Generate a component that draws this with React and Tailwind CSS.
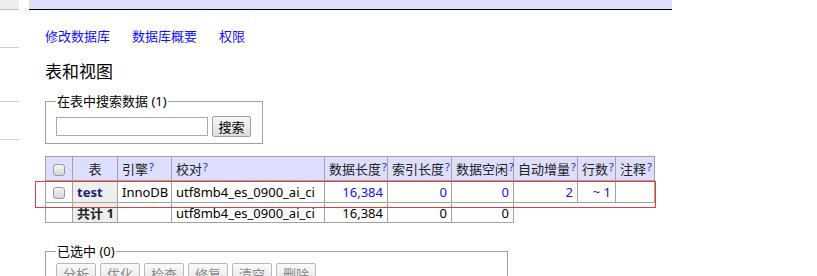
import React from "react";

const font = { fontFamily: '"Noto Sans", "Noto Sans CJK SC", sans-serif' };

const Check = () => (
  <span className="inline-block w-[12px] h-[12px] rounded-[3px] border border-[#9a9a9a] bg-gradient-to-b from-[#f6f6f6] to-[#d6d6d6] align-middle"></span>
);

const Q = () => <sup className="text-[11px] text-[#2020ff] ml-[1px] relative top-[-3px]">?</sup>;

const headers = [
  { label: "引擎", w: "w-[54px]" },
  { label: "校对", w: "w-[153px]" },
  { label: "数据长度", w: "w-[63px]" },
  { label: "索引长度", w: "w-[64px]" },
  { label: "数据空闲", w: "w-[62px]" },
  { label: "自动增量", w: "w-[64px]" },
  { label: "行数", w: "w-[38px]" },
  { label: "注释", w: "w-[39px]" },
];

const Sidebar = () => (
  <div className="w-[19px] shrink-0 flex flex-col">
    <div className="h-[10px] shrink-0 bg-[#eeeeee] border-b border-[#bdbdbd]"></div>
    <div className="h-[38px] shrink-0 border-b border-[#cfcfcf]"></div>
    <div className="h-[54px] shrink-0 border-b border-[#cfcfcf]"></div>
    <div className="h-[38px] shrink-0 border-b border-[#cfcfcf]"></div>
  </div>
);

const App = () => {
  const cell = "border border-[#a3a3a3] px-[4px] py-0";
  const btns = ["分析", "优化", "检查", "修复", "清空", "删除"];
  return (
    <div className="relative w-[817px] h-[276px] overflow-hidden bg-white flex items-start gap-[10px] text-[13px] text-black" style={font}>
      <Sidebar />
      <div className="shrink-0">
        <div className="w-[643px] h-[10px] bg-[#dedeff] border-b border-black"></div>
        <div className="pl-[16px]">
          <div className="mt-[17px] flex gap-[22px] leading-[18px] text-[#1010ff]">
            <span>修改数据库</span>
            <span>数据库概要</span>
            <span>权限</span>
          </div>
          <h2 className="mt-[16px] text-[17px] leading-[22px]">表和视图</h2>
          <fieldset className="mt-[9px] w-[218px] border border-[#a0a0a0] px-[10px] pb-[6px]">
            <legend className="px-[1px] leading-[18px]">在表中搜索数据 (1)</legend>
            <div className="mt-[6px] flex items-center gap-[4px]">
              <input className="w-[152px] h-[19px] border border-[#a9a9a9] bg-white outline-none" />
              <button className="w-[39px] h-[21px] border border-[#a0a0a0] rounded-[2px] bg-gradient-to-b from-[#f8f8f8] to-[#dcdcdc] text-[13px] leading-[18px]">搜索</button>
            </div>
          </fieldset>
          <table className="mt-[12px] border-collapse table-fixed w-[609px] leading-[18px]">
            <thead>
              <tr className="h-[24px] bg-[#dedeff] text-[#222]">
                <th className={`${cell} w-[27px] text-center`}><Check /></th>
                <th className={`${cell} w-[45px] text-center font-normal`}>表</th>
                {headers.map((h) => (
                  <th key={h.label} className={`${cell} ${h.w} text-left font-normal whitespace-nowrap`}>
                    {h.label}
                    <Q />
                  </th>
                ))}
              </tr>
            </thead>
            <tbody>
              <tr className="h-[22px]">
                <td className={`${cell} text-center`}><Check /></td>
                <th className={`${cell} text-left bg-[#eeeeee] font-bold text-[#1c1c80]`}>test</th>
                <td className={cell}>InnoDB</td>
                <td className={`${cell} whitespace-nowrap`}>utf8mb4_es_0900_ai_ci</td>
                <td className={`${cell} text-right text-[#1010ff]`}>16,384</td>
                <td className={`${cell} text-right text-[#1010ff]`}>0</td>
                <td className={`${cell} text-right text-[#1010ff]`}>0</td>
                <td className={`${cell} text-right text-[#1010ff]`}>2</td>
                <td className={`${cell} text-right text-[#1010ff]`}>~ 1</td>
                <td className={cell}></td>
              </tr>
              <tr className="h-[20px]">
                <td className={cell}></td>
                <th className={`${cell} text-left bg-[#eeeeee] font-bold text-[#222] whitespace-nowrap`}>共计 1</th>
                <td className={cell}></td>
                <td className={`${cell} whitespace-nowrap`}>utf8mb4_es_0900_ai_ci</td>
                <td className={`${cell} text-right`}>16,384</td>
                <td className={`${cell} text-right`}>0</td>
                <td className={`${cell} text-right`}>0</td>
              </tr>
            </tbody>
          </table>
          <fieldset className="mt-[19px] w-[463px] border border-[#a0a0a0] px-[10px] pb-[6px]">
            <legend className="px-[1px] leading-[18px]">已选中 (0)</legend>
            <div className="mt-[3px] flex gap-[4px]">
              {btns.map((b) => (
                <button key={b} disabled className="h-[24px] px-[6px] border border-[#b8b8b8] rounded-[2px] bg-gradient-to-b from-[#fafafa] to-[#e2e2e2] text-[#8a8a8a] text-[13px]">
                  {b}
                </button>
              ))}
            </div>
          </fieldset>
        </div>
      </div>
      <div className="absolute left-[35px] top-[181px] w-[621px] h-[27px] border border-[#e23c3c] pointer-events-none"></div>
    </div>
  );
};

export default App;
